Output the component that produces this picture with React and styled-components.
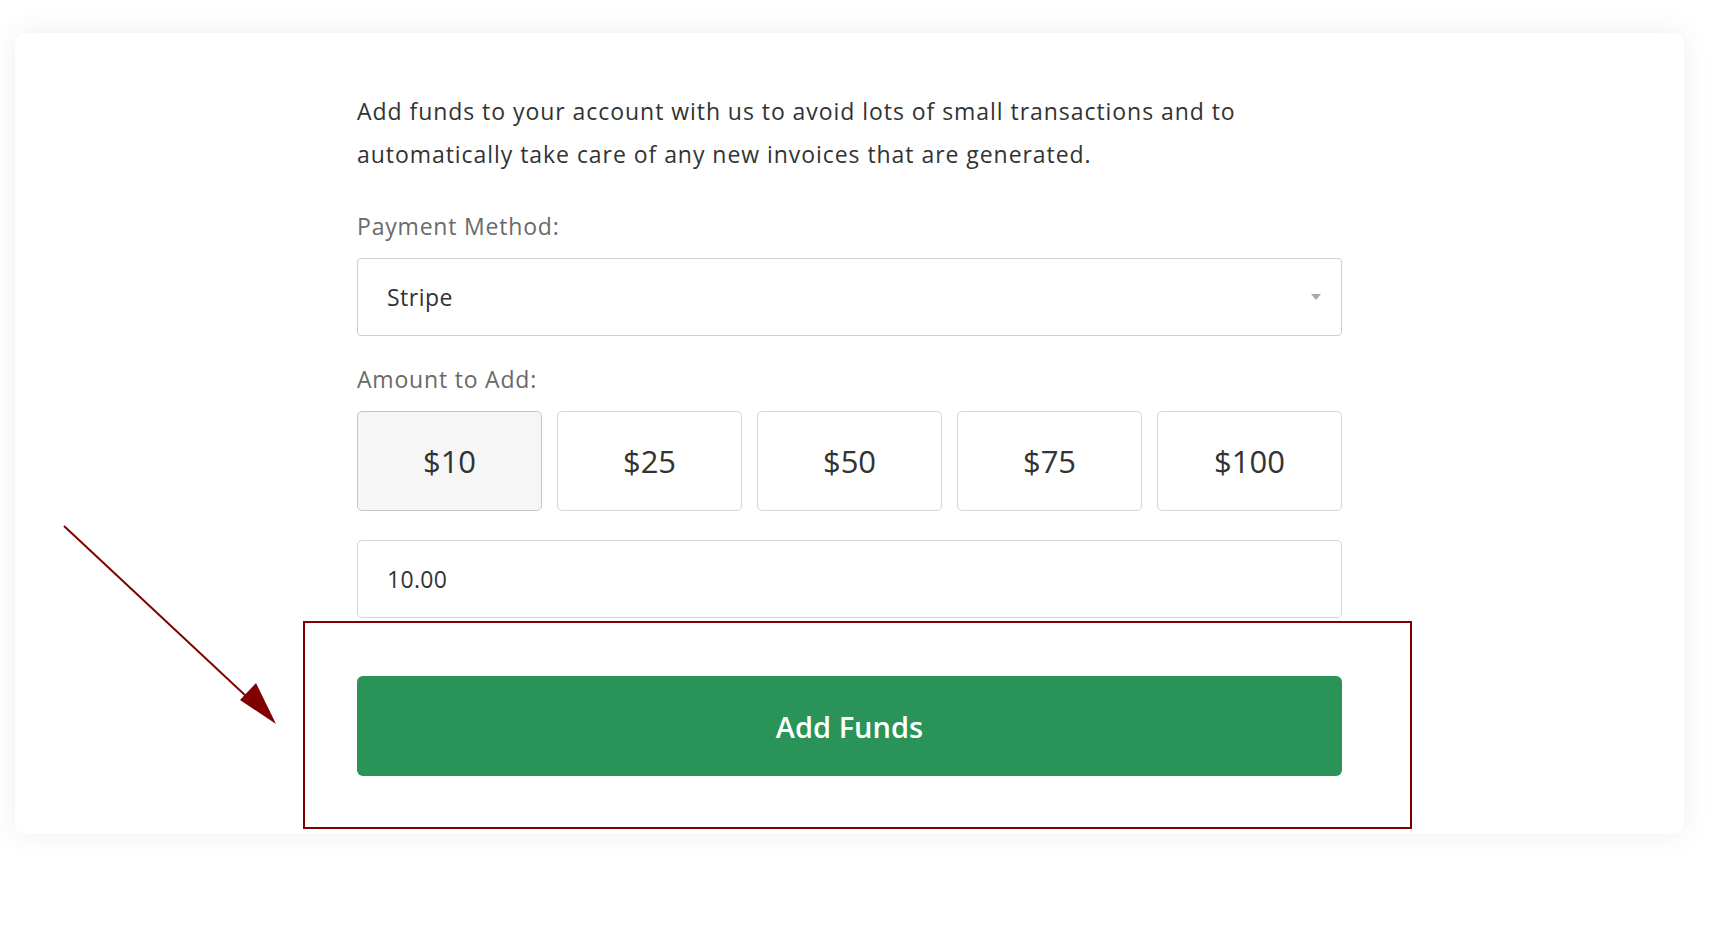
import React, { useState } from 'react';
import styled, { createGlobalStyle } from 'styled-components';

const Global = createGlobalStyle`
  html, body {
    margin: 0;
    padding: 0;
    background: #fff;
  }
  body {
    font-family: "Open Sans", "Noto Sans", sans-serif;
    color: #333;
  }
`;

const Page = styled.div`
  position: relative;
  padding: 33px 44px 0 15px;
  min-height: 946px;
  box-sizing: border-box;
`;

const Card = styled.div`
  background: #fff;
  border-radius: 10px;
  box-shadow: 0 0 30px rgba(0, 0, 0, 0.07);
  padding: 57px 0 58px;
  display: flex;
  justify-content: center;
`;

const Column = styled.div`
  width: 985px;
  display: flex;
  flex-direction: column;
`;

const Intro = styled.p`
  margin: 0;
  font-size: 23px;
  letter-spacing: 0.95px;
  line-height: 43px;
  color: #333;
`;

const Label = styled.div`
  font-size: 23px;
  letter-spacing: 0.8px;
  line-height: 30px;
  color: #6a6a6a;
  margin-top: ${(p) => p.$top}px;
  margin-bottom: 17px;
`;

const SelectBox = styled.div`
  position: relative;
  height: 78px;
  border: 1px solid #cfcfcf;
  border-radius: 4px;
  box-sizing: border-box;
  display: flex;
  align-items: center;
  padding: 0 30px 0 29px;
  font-size: 23px;
  letter-spacing: 0.5px;
  color: #333;
`;

const Caret = styled.span`
  margin-left: auto;
  margin-right: -10px;
  width: 0;
  height: 0;
  border-left: 5px solid transparent;
  border-right: 5px solid transparent;
  border-top: 6px solid #aaa;
`;

const Amounts = styled.div`
  display: grid;
  grid-template-columns: repeat(5, 1fr);
  gap: 15px;
`;

const Amount = styled.button`
  height: 100px;
  border: 1px solid ${(p) => (p.$active ? '#c6c6c6' : '#d6d6d6')};
  background: ${(p) => (p.$active ? '#f6f6f6' : '#fff')};
  border-radius: 5px;
  font-family: "Open Sans", "Noto Sans", sans-serif;
  font-size: 31px;
  font-weight: 500;
  color: #333;
  cursor: pointer;
`;

const AmountInput = styled.input`
  margin-top: 29px;
  height: 78px;
  border: 1px solid #d6d6d6;
  border-radius: 5px;
  box-sizing: border-box;
  padding: 0 30px 0 29px;
  font-family: "Open Sans", "Noto Sans", sans-serif;
  font-size: 23px;
  letter-spacing: 0.3px;
  color: #333;
  outline: none;
`;

const SubmitWrap = styled.div`
  position: relative;
  margin-top: 58px;
`;

const Submit = styled.button`
  width: 100%;
  height: 100px;
  border: none;
  border-radius: 6px;
  background: #2a9458;
  color: #fff;
  font-family: "Open Sans", "Noto Sans", sans-serif;
  font-size: 29px;
  font-weight: 600;
  cursor: pointer;
`;

const Highlight = styled.div`
  position: absolute;
  left: -54px;
  right: -70px;
  top: -55px;
  bottom: -53px;
  border: 2px solid #800000;
  pointer-events: none;
`;

const Arrow = styled.svg`
  position: absolute;
  left: 0;
  top: 0;
  pointer-events: none;
`;

export default function App() {
  const values = [10, 25, 50, 75, 100];
  const [amount, setAmount] = useState(10);

  return (
    <Page>
      <Global />
      <Card>
        <Column>
          <Intro>
            Add funds to your account with us to avoid lots of small transactions and to
            <br />
            automatically take care of any new invoices that are generated.
          </Intro>
          <Label $top={35}>Payment Method:</Label>
          <SelectBox>
            Stripe
            <Caret />
          </SelectBox>
          <Label $top={28}>Amount to Add:</Label>
          <Amounts>
            {values.map((v) => (
              <Amount key={v} $active={v === amount} onClick={() => setAmount(v)}>
                ${v}
              </Amount>
            ))}
          </Amounts>
          <AmountInput value={amount.toFixed(2)} readOnly />
          <SubmitWrap>
            <Submit>Add Funds</Submit>
            <Highlight />
          </SubmitWrap>
        </Column>
      </Card>
      <Arrow width="300" height="760" viewBox="0 0 300 760">
        <line x1="64" y1="526" x2="262" y2="711" stroke="#800000" strokeWidth="2" />
        <polygon points="276,724 240,700 256,683" fill="#800000" />
      </Arrow>
    </Page>
  );
}
